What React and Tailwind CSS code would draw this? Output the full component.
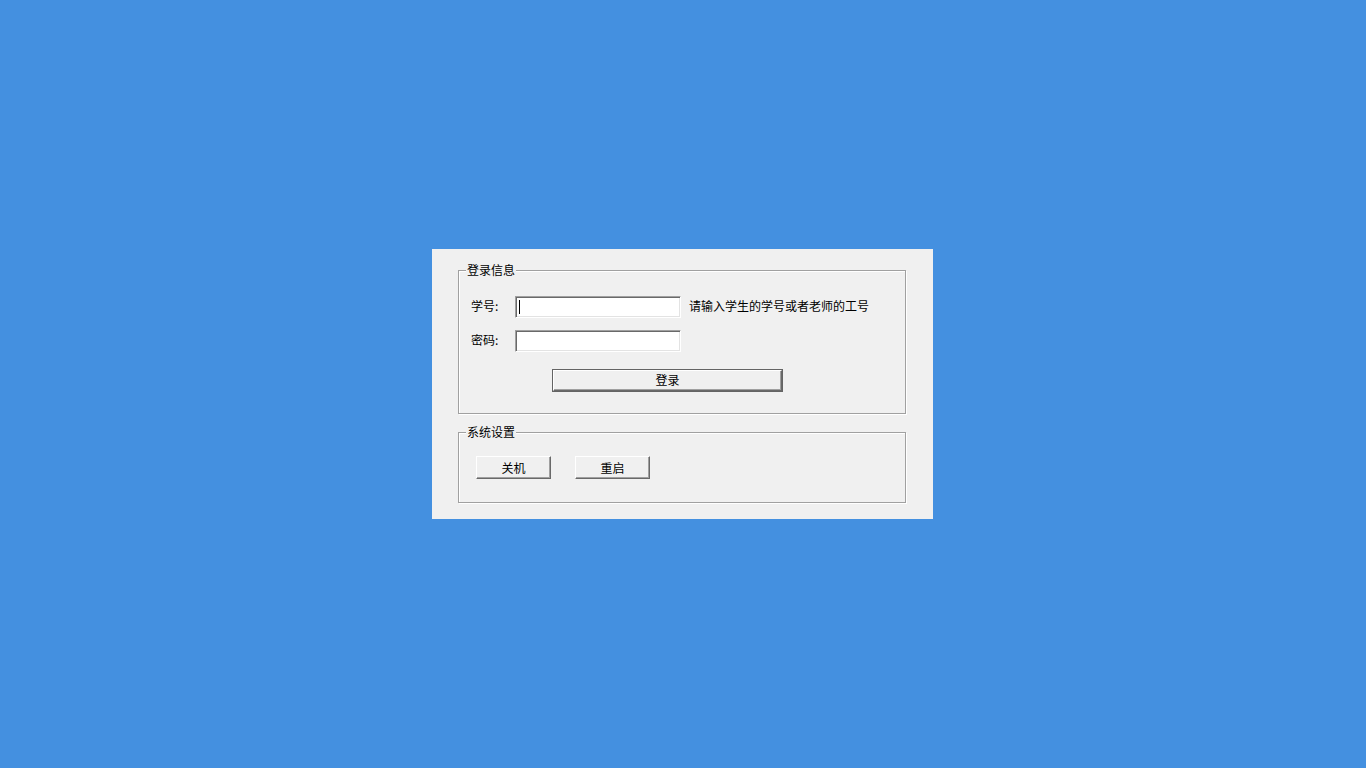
export default function App() {
  const font = { fontFamily: '"Noto Sans CJK SC", "Liberation Sans", sans-serif' };

  const btn =
    'border border-t-white border-l-white border-r-[#696969] border-b-[#696969] shadow-[inset_-1px_-1px_0_#a0a0a0] bg-[#f0f0f0] text-[12px] leading-none text-black flex items-center justify-center';

  const input =
    'w-[166px] h-[22px] bg-white border border-t-[#a0a0a0] border-l-[#a0a0a0] border-r-white border-b-white shadow-[inset_1px_1px_0_#696969,inset_-1px_-1px_0_#e3e3e3] outline-none px-[3px] text-[12px]';

  const group =
    'relative w-[448px] border border-[#a0a0a0] shadow-[1px_1px_0_#fff,inset_1px_1px_0_#fff]';

  return (
    <div className="w-full h-screen bg-[#4490e0] flex items-center justify-center pr-px" style={font}>
      <div className="w-[501px] h-[270px] bg-[#f0f0f0] pl-[26px] pt-[21px] flex flex-col gap-[18px] text-black">
        {/* 登录信息 */}
        <div className={group + ' h-[144px]'}>
          <span className="absolute -top-[9px] left-[7px] px-[1px] bg-[#f0f0f0] text-[12px] leading-[16px]">
            登录信息
          </span>
          <div className="pt-[25px] flex flex-col">
            <div className="flex items-center h-[22px]">
              <span className="w-[56px] pl-[12px] text-[12px] leading-[16px] -mt-[2px]">学号:</span>
              <div className={input + ' flex items-center'}>
                <span className="w-px h-[14px] bg-black" />
              </div>
              <span className="ml-[8px] text-[12px] leading-[16px] -mt-[2px]">请输入学生的学号或者老师的工号</span>
            </div>
            <div className="flex items-center h-[22px] mt-[12px]">
              <span className="w-[56px] pl-[12px] text-[12px] leading-[16px] -mt-[2px]">密码:</span>
              <input type="password" className={input} />
            </div>
            <div className="mt-[17px] ml-[93px] w-[231px] h-[23px] border border-[#646464]">
              <button className={btn + ' w-full h-full pb-[2px]'}>登录</button>
            </div>
          </div>
        </div>

        {/* 系统设置 */}
        <div className={group + ' h-[71px]'}>
          <span className="absolute -top-[9px] left-[7px] px-[1px] bg-[#f0f0f0] text-[12px] leading-[16px]">
            系统设置
          </span>
          <div className="pt-[23px] pl-[17px] flex gap-[24px]">
            <button className={btn + ' w-[75px] h-[23px]'}>关机</button>
            <button className={btn + ' w-[75px] h-[23px]'}>重启</button>
          </div>
        </div>
      </div>
    </div>
  );
}
